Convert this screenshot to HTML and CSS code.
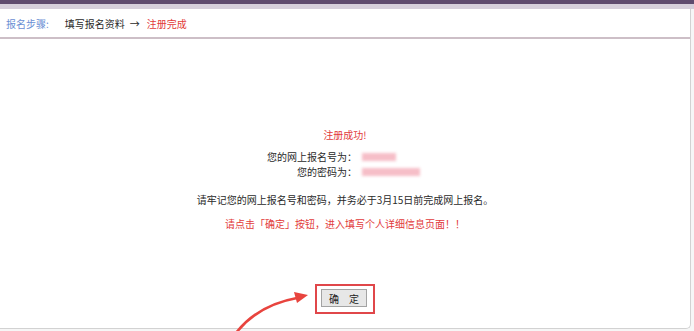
FILE: index.html
```html
<!DOCTYPE html>
<html lang="zh-CN">
<head>
  <meta charset="UTF-8" />
  <meta name="viewport" content="width=device-width, initial-scale=1.0">
  <title>注册完成</title>
  <link rel="stylesheet" href="styles.css">
</head>
<body>
  <div class="topbar"></div>
  <div class="subbar"></div>

  <div class="panel">
    <div class="steps">
      <span class="steps-label">报名步骤:</span>
      <span class="step">填写报名资料</span>
      <span class="step-arrow">→</span>
      <span class="step step-current">注册完成</span>
    </div>

    <div class="result">
      <p class="result-title">注册成功!</p>

      <div class="account">
        <span class="account-label">您的网上报名号为：</span>
        <span class="account-value"><i class="blur blur-short"></i></span>
        <span class="account-label">您的密码为：</span>
        <span class="account-value"><i class="blur blur-long"></i></span>
      </div>

      <p class="result-note">请牢记您的网上报名号和密码，并务必于3月15日前完成网上报名。</p>
      <p class="result-warn">请点击「确定」按钮，进入填写个人详细信息页面！！</p>

      <div class="confirm-box">
        <button class="confirm-btn" type="button">确 定</button>
      </div>
    </div>
  </div>

  <!-- annotation arrow pointing at the button -->
  <svg class="hint-arrow" width="694" height="331" viewBox="0 0 694 331">
    <path d="M236 333 Q258 305 297 298" fill="none" stroke="#e8443e" stroke-width="2.6" stroke-linecap="round"/>
    <path d="M308 295 L294 292 L297 303 Z" fill="#e8443e"/>
  </svg>
</body>
</html>
```

FILE: styles.css
```css
body {
  margin: 0;
  height: 331px;
  overflow: hidden;
  position: relative;
  background-color: #f6f6f6;
  font-family: "Noto Sans CJK SC", "Noto Sans", sans-serif;
  font-size: 10px;
  color: #2a2a2a;
}
.topbar {
  height: 4px;
  background-color: #5f4b6e;
}
.subbar {
  height: 5px;
  background-color: #d6cfdb;
}
.panel {
  width: 690px;
  height: 319px;
  background-color: #fff;
  border-right: 1px solid #d2d2d2;
  border-bottom: 1px solid #d2d2d2;
  border-bottom-right-radius: 5px;
}
.steps {
  display: flex;
  align-items: center;
  height: 30px;
  padding: 1px 0 0 6px;
  box-sizing: border-box;
  border-bottom: 2px solid #cdbfc7;
}
.steps-label {
  color: #6b8fd4;
  margin-right: 16px;
}
.step-arrow {
  margin: 0 7px 0 5px;
}
.step-current {
  color: #e23b3b;
}
.result {
  display: flex;
  flex-direction: column;
  align-items: center;
  padding-top: 89px;
  line-height: 13px;
}
.result p {
  margin: 0;
}
.result-title {
  color: #e23b3b;
}
.account {
  display: grid;
  grid-template-columns: 1fr 1fr;
  column-gap: 5px;
  width: 100%;
  box-sizing: border-box;
  padding-left: 29px;
  margin-top: 9px;
  line-height: 14.5px;
}
.account-label {
  text-align: right;
}
.account-value {
  display: flex;
  align-items: center;
}
.blur {
  display: block;
  height: 8px;
  background-color: #f4a9b6;
  filter: blur(1.8px);
  opacity: 0.75;
}
.blur-short {
  width: 34px;
}
.blur-long {
  width: 58px;
}
.result-note {
  margin-top: 14px !important;
}
.result-warn {
  margin-top: 11px !important;
  color: #e23b3b;
}
.confirm-box {
  margin-top: 54px;
  padding: 3px 6px 5px 4px;
  border: 2px solid #e0474a;
}
.confirm-btn {
  width: 46px;
  height: 18px;
  padding: 0;
  font-family: inherit;
  font-size: 10px;
  letter-spacing: 4px;
  text-indent: 4px;
  color: #222;
  background-color: #e7e7e7;
  border: 1px solid #a3a3a3;
}
.hint-arrow {
  position: absolute;
  left: 0;
  top: 0;
  pointer-events: none;
}
```
